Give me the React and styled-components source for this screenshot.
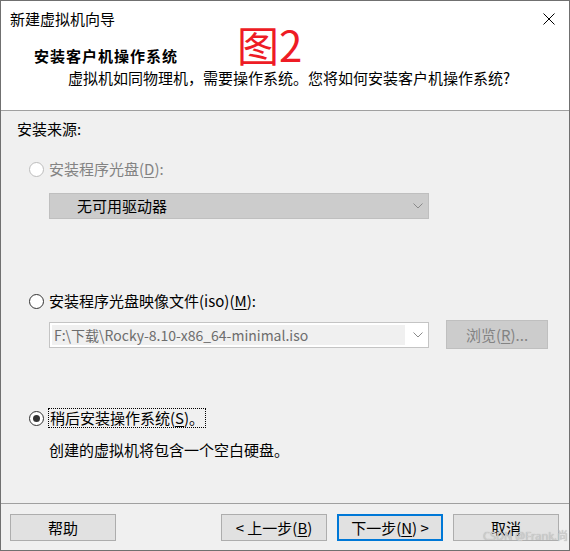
import styled, { createGlobalStyle } from 'styled-components';

const GlobalStyle = createGlobalStyle`
  html, body {
    margin: 0;
    padding: 0;
    background: #fff;
  }
  * {
    box-sizing: border-box;
  }
`;

const Window = styled.div`
  position: relative;
  width: 570px;
  height: 551px;
  border: 1px solid #707070;
  background: #f0f0f0;
  display: flex;
  flex-direction: column;
  font-family: "Noto Sans CJK SC", sans-serif;
  font-size: 15px;
  line-height: 20px;
  color: #000;
`;

const Header = styled.header`
  position: relative;
  flex: none;
  height: 110px;
  padding: 8px 0 0 9px;
  background: #fff;
  border-bottom: 1px solid #a0a0a0;
`;

const TitleBar = styled.div`
  display: flex;
  justify-content: space-between;
  align-items: center;
  height: 20px;
  padding-right: 14px;
`;

const CloseIcon = () => (
  <svg width="12" height="12" viewBox="0 0 12 12">
    <path d="M0.5 0.5 L11.5 11.5 M11.5 0.5 L0.5 11.5" stroke="#000" strokeWidth="1" />
  </svg>
);

const Heading = styled.div`
  margin-top: 17px;
  padding-left: 24px;
  font-weight: 700;
  letter-spacing: 1px;
`;

const Subtitle = styled.div`
  margin-top: 2px;
  padding-left: 58px;
`;

// red annotation drawn over the header
const Annotation = styled.div`
  position: absolute;
  left: 236px;
  top: 25px;
  font-size: 42px;
  line-height: 36px;
  color: #ee1c25;
`;

const Body = styled.main`
  flex: 1;
  padding: 8px 0 0 16px;
`;

const RadioRow = styled.div`
  display: flex;
  align-items: center;
  gap: ${(p) => (p.$focused ? 4 : 5)}px;
  height: 20px;
  margin: ${(p) => p.$top}px 0 0 12px;
`;

const Circle = styled.span`
  position: relative;
  flex: none;
  width: 15px;
  height: 15px;
  border-radius: 50%;
  border: 1px solid ${(p) => (p.$disabled ? '#bcbcbc' : '#333')};
  background: #fff;

  &::after {
    content: '';
    display: ${(p) => (p.$checked ? 'block' : 'none')};
    position: absolute;
    left: 3px;
    top: 3px;
    width: 7px;
    height: 7px;
    border-radius: 50%;
    background: #333;
  }
`;

const Label = styled.span`
  color: ${(p) => (p.$disabled ? '#838383' : '#000')};
  border: ${(p) => (p.$focused ? '1px dotted #000' : 'none')};
  line-height: ${(p) => (p.$focused ? 18 : 20)}px;
  padding: 0 ${(p) => (p.$focused ? 1 : 0)}px;
`;

const U = styled.span`
  text-decoration: underline;
  text-underline-offset: 2px;
`;

const Select = styled.div`
  display: flex;
  align-items: center;
  justify-content: space-between;
  width: 380px;
  height: 26px;
  margin: 14px 0 0 32px;
  padding: 0 5px 0 27px;
  border: 1px solid #bfbfbf;
  background: #cccccc;
`;

const Chevron = () => (
  <svg width="10" height="6" viewBox="0 0 10 6">
    <polyline points="0.5,0.5 5,5 9.5,0.5" fill="none" stroke="#8a8a8a" strokeWidth="1" />
  </svg>
);

const FileRow = styled.div`
  display: flex;
  align-items: center;
  gap: 17px;
  margin: 9px 0 0 32px;
`;

const Combo = styled.div`
  display: flex;
  align-items: center;
  width: 380px;
  height: 26px;
  padding: 2px 5px 2px 2px;
  border: 1px solid #c4c4c4;
  background: #fff;
`;

const ComboField = styled.div`
  flex: 1;
  height: 100%;
  margin-right: 8px;
  padding-left: 2px;
  font-size: 14px;
  line-height: 20px;
  background: #f0f0f0;
  color: #6d6d6d;
  white-space: nowrap;
`;

const DisabledButton = styled.div`
  display: flex;
  align-items: center;
  justify-content: center;
  width: 102px;
  height: 29px;
  border: 1px solid #bfbfbf;
  background: #cccccc;
  color: #838383;
`;

const Note = styled.div`
  margin: 12px 0 0 32px;
`;

const Footer = styled.footer`
  flex: none;
  display: flex;
  height: 47px;
  padding: 10px 10px 9px 9px;
  border-top: 1px solid #a0a0a0;
`;

const ButtonGroup = styled.div`
  display: flex;
  gap: 10px;
  margin-left: auto;
`;

const Button = styled.div`
  display: flex;
  align-items: center;
  justify-content: center;
  width: 106px;
  height: 27px;
  border: ${(p) => (p.$primary ? '2px solid #0078d7' : '1px solid #adadad')};
  background: #e1e1e1;
`;

const Watermark = styled.div`
  position: absolute;
  right: 1px;
  bottom: 7px;
  font-family: "Noto Sans", "Noto Sans CJK SC", sans-serif;
  font-size: 11px;
  line-height: 14px;
  color: #cfcfcf;
  text-shadow: 0 0 1px #a0a0a0;
`;

const App = () => (
  <>
    <GlobalStyle />
    <Window>
      <Header>
        <TitleBar>
          <span>新建虚拟机向导</span>
          <CloseIcon />
        </TitleBar>
        <Heading>安装客户机操作系统</Heading>
        <Subtitle>虚拟机如同物理机，需要操作系统。您将如何安装客户机操作系统?</Subtitle>
        <Annotation>图2</Annotation>
      </Header>

      <Body>
        <div>安装来源:</div>

        <RadioRow $top={20}>
          <Circle $disabled />
          <Label $disabled>安装程序光盘(<U>D</U>):</Label>
        </RadioRow>
        <Select>
          <span>无可用驱动器</span>
          <Chevron />
        </Select>

        <RadioRow $top={72}>
          <Circle />
          <Label>安装程序光盘映像文件(iso)(<U>M</U>):</Label>
        </RadioRow>
        <FileRow>
          <Combo>
            <ComboField>F:\下载\Rocky-8.10-x86_64-minimal.iso</ComboField>
            <Chevron />
          </Combo>
          <DisabledButton>浏览(<U>R</U>)...</DisabledButton>
        </FileRow>

        <RadioRow $top={59} $focused>
          <Circle $checked />
          <Label $focused>稍后安装操作系统(<U>S</U>)。</Label>
        </RadioRow>
        <Note>创建的虚拟机将包含一个空白硬盘。</Note>
      </Body>

      <Footer>
        <Button>帮助</Button>
        <ButtonGroup>
          <Button>&lt; 上一步(<U>B</U>)</Button>
          <Button $primary>下一步(<U>N</U>) &gt;</Button>
          <Button>取消</Button>
        </ButtonGroup>
      </Footer>
      <Watermark>CSDN @Frank.尚</Watermark>
    </Window>
  </>
);

export default App;
